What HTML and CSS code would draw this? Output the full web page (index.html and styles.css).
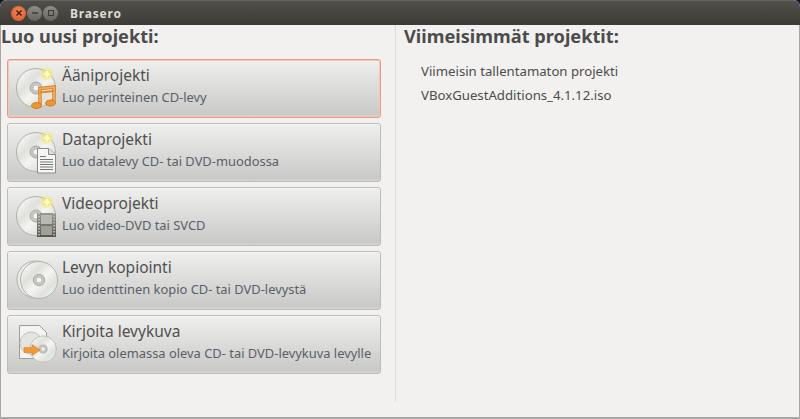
FILE: index.html
```html
<!DOCTYPE html>
<html lang="fi">
<head>
<meta charset="utf-8">
<title>Brasero</title>
<link rel="stylesheet" href="styles.css">
</head>
<body>
<svg class="defs" width="0" height="0" aria-hidden="true">
  <defs>
    <linearGradient id="discGrad" x1="0.1" y1="0.1" x2="0.9" y2="0.9">
      <stop offset="0" stop-color="#f6f6f4"/>
      <stop offset="0.3" stop-color="#e0e0dc"/>
      <stop offset="0.55" stop-color="#f4f4f2"/>
      <stop offset="0.8" stop-color="#e0e0dc"/>
      <stop offset="1" stop-color="#f2f2f0"/>
    </linearGradient>
    <radialGradient id="sparkle">
      <stop offset="0" stop-color="#fff8a0"/>
      <stop offset="0.45" stop-color="#f6e860" stop-opacity="0.85"/>
      <stop offset="1" stop-color="#f6e860" stop-opacity="0"/>
    </radialGradient>
    <linearGradient id="filmGrad" x1="0" y1="0" x2="0" y2="1">
      <stop offset="0" stop-color="#9a9a90"/>
      <stop offset="1" stop-color="#55554e"/>
    </linearGradient>
    <g id="disc">
      <circle cx="20" cy="20" r="19.500" fill="url(#discGrad)" stroke="#b0b0ac"/>
      <circle cx="20" cy="20" r="6" fill="#c6c6c2" stroke="#a8a8a4"/>
      <circle cx="20" cy="20" r="3" fill="#f4f4f2" stroke="#aaa" stroke-width="0.6"/>
    </g>
    <g id="spark">
      <circle cx="31" cy="6" r="7" fill="url(#sparkle)"/>
      <path d="M31 2l1.200 2.800 2.800 1.200-2.800 1.200-1.200 2.800-1.200-2.800-2.800-1.200 2.800-1.200z" fill="#fffde0"/>
    </g>
  </defs>
</svg>
<div class="window">
  <header class="titlebar">
    <div class="controls">
      <span class="ctl ctl-close"><svg width="12" height="12" viewBox="0 0 12 12"><path d="M3.500 3.500l5 5M8.500 3.500l-5 5" stroke="#4a1c0c" stroke-width="1.500" fill="none"/></svg></span>
      <span class="ctl ctl-min"><svg width="12" height="12" viewBox="0 0 12 12"><path d="M3 6h6" stroke="#3c3b37" stroke-width="1.500"/></svg></span>
      <span class="ctl ctl-max"><svg width="12" height="12" viewBox="0 0 12 12"><rect x="3.500" y="3.500" width="5" height="5" fill="none" stroke="#3c3b37"/></svg></span>
    </div>
    <span class="title">Brasero</span>
  </header>
  <main class="content">
    <section class="left">
      <h1 class="heading heading-left">Luo uusi projekti:</h1>
      <div class="buttons">
        <button class="pbtn pbtn-focus">
          <svg class="icon" width="42" height="42" viewBox="0 0 42 42">
            <use href="#disc"/><use href="#spark"/>
            <path d="M24 37V20.500l14-1.500V34" fill="none" stroke="#d9791a" stroke-width="3.400"/>
            <path d="M24 37V20.500l14-1.500V34" fill="none" stroke="#f7ad55" stroke-width="1.800"/>
            <path d="M24 24.500l14-1.500" fill="none" stroke="#e58a28" stroke-width="2"/>
            <ellipse cx="20.500" cy="37.500" rx="5" ry="3" fill="#ee9430" stroke="#c96f12" stroke-width=".8"/>
            <ellipse cx="34.500" cy="35" rx="5" ry="3" fill="#ee9430" stroke="#c96f12" stroke-width=".8"/>
          </svg>
          <span class="ptext"><span class="ptitle">Ääniprojekti</span><span class="psub">Luo perinteinen CD-levy</span></span>
        </button>
        <button class="pbtn">
          <svg class="icon" width="42" height="42" viewBox="0 0 42 42">
            <use href="#disc"/><use href="#spark"/>
            <path d="M21.500 16.500h11l7 6v18.500h-18z" fill="#f6f6f4" stroke="#8c8c88"/>
            <path d="M32.500 16.500v6h7" fill="#ddd" stroke="#8c8c88"/>
            <path d="M24 24.500h6M24 27.500h13M24 30h13M24 32.500h13M24 35h13M24 37.500h13" stroke="#77777a"/>
          </svg>
          <span class="ptext"><span class="ptitle">Dataprojekti</span><span class="psub">Luo datalevy CD- tai DVD-muodossa</span></span>
        </button>
        <button class="pbtn">
          <svg class="icon" width="42" height="42" viewBox="0 0 42 42">
            <use href="#disc"/><use href="#spark"/>
            <rect x="21" y="17" width="19" height="24" fill="url(#filmGrad)"/>
            <rect x="25" y="19" width="11" height="9" fill="#b8bab2"/>
            <rect x="25" y="30" width="11" height="9" fill="#9fa198"/>
            <path d="M23 17v24M38 17v24" stroke="#c4c4bc" stroke-width="1.600" stroke-dasharray="1.500 1.500"/>
          </svg>
          <span class="ptext"><span class="ptitle">Videoprojekti</span><span class="psub">Luo video-DVD tai SVCD</span></span>
        </button>
        <button class="pbtn">
          <svg class="icon" width="42" height="42" viewBox="0 0 42 42">
            <circle cx="19.500" cy="19.500" r="18.500" fill="#ebebe8" stroke="#b0b0ac"/>
            <g transform="translate(4 1) scale(.95)"><use href="#disc"/></g>
          </svg>
          <span class="ptext"><span class="ptitle">Levyn kopiointi</span><span class="psub">Luo identtinen kopio CD- tai DVD-levystä</span></span>
        </button>
        <button class="pbtn">
          <svg class="icon" width="42" height="42" viewBox="0 0 42 42">
            <path d="M3.500 1.500h20l7 7v26h-27z" fill="#f4f4f2" stroke="#9c9c98"/>
            <circle cx="15" cy="19" r="11" fill="#e4e4e0" stroke="#c0c0bc"/>
            <g transform="translate(13.500 11.500) scale(.68)"><use href="#disc"/></g>
            <path d="M8 23.500h8v-3l8 5.500-8 5.500v-3h-8z" fill="#f09a38" stroke="#e08020" stroke-width=".6"/>
          </svg>
          <span class="ptext"><span class="ptitle">Kirjoita levykuva</span><span class="psub">Kirjoita olemassa oleva CD- tai DVD-levykuva levylle</span></span>
        </button>
      </div>
    </section>
    <section class="right">
      <h2 class="heading heading-right">Viimeisimmät projektit:</h2>
      <ul class="recent">
        <li>Viimeisin tallentamaton projekti</li>
        <li>VBoxGuestAdditions_4.1.12.iso</li>
      </ul>
    </section>
  </main>
</div>
</body>
</html>
```

FILE: styles.css
```css
* { box-sizing: border-box; }
html, body { margin: 0; height: 100%; }
body {
  background: #1d1230;
  font-family: "Noto Sans", "Open Sans", sans-serif;
  color: #4c4c4c;
  overflow: hidden;
}
.defs { position: absolute; }
.window {
  width: 800px;
  height: 419px;
  display: flex;
  flex-direction: column;
  border-radius: 7px 7px 0 0;
  overflow: hidden;
  background: #f2f1f0;
  border-bottom: 2px solid #a8a7a5;
  box-shadow: inset 1px 0 #a8a7a5, inset -1px 0 #a8a7a5;
}
.titlebar {
  height: 25px;
  flex: none;
  display: flex;
  align-items: center;
  background: linear-gradient(#504f49, #3c3b37);
  border-top: 1px solid #62615b;
  padding-left: 11px;
}
.controls { display: flex; gap: 1px; }
.ctl {
  width: 15px;
  height: 15px;
  border-radius: 50%;
  display: flex;
  align-items: center;
  justify-content: center;
}
.ctl-close { background: radial-gradient(circle at 50% 40%, #f58a5c, #d84d1d); }
.ctl-min, .ctl-max { background: linear-gradient(#8e8d87, #64635d); }
.title {
  margin-left: 12px;
  font-size: 12px;
  font-weight: 700;
  letter-spacing: 0.8px;
  color: #dfdbd2;
}
.content { flex: 1; display: flex; min-height: 0; }
.left { width: 395px; flex: none; padding: 0 14px 0 1px; }
.right {
  flex: 1;
  margin-bottom: 15px;
  border-left: 1px solid #dddcda;
  padding-left: 8px;
}
.heading {
  margin: -1px 0 0;
  font-size: 18.200px;
  font-weight: 700;
  line-height: 24px;
  color: #4c4c4c;
}
.buttons {
  display: flex;
  flex-direction: column;
  gap: 5px;
  margin: 11px 0 0 6px;
}
.pbtn {
  height: 59px;
  padding: 0 0 0 8px;
  display: flex;
  align-items: center;
  gap: 4px;
  border: 1px solid #bdbcb8;
  border-radius: 3px;
  background: linear-gradient(#efefed, #c9c9c7 95%, #d6d6d4);
  box-shadow: inset 0 1px 0 #f6f6f5;
  font: inherit;
  color: #505050;
  text-align: left;
}
.pbtn-focus {
  border-color: #e99a82;
  box-shadow: inset 0 0 0 1px #f3c8b8;
}
.icon { flex: none; }
.ptext { display: flex; flex-direction: column; margin-bottom: 3px; }
.ptitle { font-size: 15.500px; line-height: 20px; }
.psub { font-size: 12.900px; line-height: 24px; color: #5a5f6a; }
.recent {
  list-style: none;
  margin: 11px 0 0;
  padding: 0 0 0 17px;
  font-size: 13.200px;
  line-height: 24px;
}
```
